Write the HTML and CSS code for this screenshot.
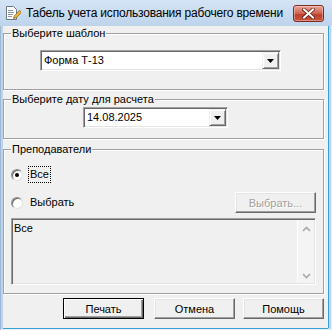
FILE: index.html
```html
<!DOCTYPE html>
<html lang="ru">
<head>
    <meta charset="UTF-8">
    <title>Табель учета использования рабочего времени</title>
    <link rel="stylesheet" href="styles.css">
</head>
<body>
    <div class="window">
        <div class="titlebar">
            <svg class="app-icon" width="16" height="16" viewBox="0 0 16 16">
                <path d="M1.5 1.5h7l3 3v10h-10z" fill="#fff" stroke="#6f7a88"/>
                <path d="M3 5.5h5M3 7.5h6M3 9.5h5M3 11.5h4" stroke="#8d99a8"/>
                <path d="M8.5 13.5l0.8-2.6 5.4-5.4 1.8 1.8-5.4 5.4z" fill="#f3b93a" stroke="#8a5b17" stroke-width="0.8"/>
            </svg>
            <span class="title">Табель учета использования рабочего времени</span>
            <div class="close-btn">
                <svg width="13" height="11" viewBox="0 0 13 11">
                    <path d="M2 1.5l9 8M11 1.5l-9 8" stroke="#5a1d14" stroke-width="3.6" stroke-linecap="square"/>
                    <path d="M2 1.5l9 8M11 1.5l-9 8" stroke="#fff" stroke-width="2" stroke-linecap="square"/>
                </svg>
            </div>
        </div>

        <div class="client">
            <div class="group group-template">
                <span class="group-title">Выберите шаблон</span>
                <div class="combo combo-template">
                    <span class="combo-text">Форма Т-13</span>
                    <span class="combo-btn"><svg width="7" height="4" viewBox="0 0 7 4"><path d="M0 0h7L3.5 4z"/></svg></span>
                </div>
            </div>

            <div class="group group-date">
                <span class="group-title">Выберите дату для расчета</span>
                <div class="combo combo-date">
                    <span class="combo-text">14.08.2025</span>
                    <span class="combo-btn"><svg width="7" height="4" viewBox="0 0 7 4"><path d="M0 0h7L3.5 4z"/></svg></span>
                </div>
            </div>

            <div class="group group-teachers">
                <span class="group-title">Преподаватели</span>
                <div class="radio-row">
                    <span class="radio checked"></span>
                    <span class="radio-label focused">Все</span>
                </div>
                <div class="radio-row radio-row-pick">
                    <span class="radio"></span>
                    <span class="radio-label">Выбрать</span>
                    <button class="btn btn-pick" disabled>Выбрать...</button>
                </div>
                <div class="memo">
                    <div class="memo-text">Все</div>
                    <div class="scrollbar">
                        <svg width="9" height="6" viewBox="0 0 9 6"><path d="M1 5l3.5-3.5L8 5" fill="none" stroke="#a8a8a8" stroke-width="1.6"/></svg>
                        <svg width="9" height="6" viewBox="0 0 9 6"><path d="M1 1l3.5 3.5L8 1" fill="none" stroke="#a8a8a8" stroke-width="1.6"/></svg>
                    </div>
                </div>
            </div>

            <div class="actions">
                <button class="btn btn-default btn-print">Печать</button>
                <button class="btn btn-cancel">Отмена</button>
                <button class="btn">Помощь</button>
            </div>
        </div>
    </div>
</body>
</html>
```

FILE: styles.css
```css
* {
    margin: 0;
    padding: 0;
    box-sizing: border-box;
}

body {
    width: 332px;
    height: 330px;
    overflow: hidden;
    background: #fff;
    color: #000;
    font-family: "Liberation Sans", Arial, sans-serif;
    font-size: 11px;
}

.window {
    width: 332px;
    height: 330px;
    background: #bed4eb;
    box-shadow: inset 1px 0 0 #9fb8d2, inset -1px 0 0 #e6f0fa, inset 0 -1px 0 #e6f0fa;
}

.titlebar {
    height: 26px;
    display: flex;
    align-items: center;
    padding: 0 8px 0 5px;
    background: linear-gradient(#d4e4f5, #bed4eb);
}

.app-icon {
    flex-shrink: 0;
}

.title {
    margin-left: 5px;
    font-size: 12px;
    letter-spacing: -0.2px;
    color: #000;
    white-space: nowrap;
}

.close-btn {
    flex-shrink: 0;
    margin-left: auto;
    width: 31px;
    height: 17px;
    display: flex;
    align-items: center;
    justify-content: center;
    border: 1px solid #7d2b1f;
    border-radius: 3px;
    background: linear-gradient(#e9a497, #d0634f 50%, #bd3f29 51%, #c9533c);
    box-shadow: inset 0 0 0 1px rgba(255,255,255,0.35);
}

.client {
    margin: 0 4px 0 3px;
    height: 302px;
    padding: 7px 4px 0 0;
    background: #f0f0f0;
    box-shadow: 1px 0 0 #3aa0d8, 0 1px 0 #3aa0d8;
}

/* group boxes */

.group {
    position: relative;
    border: 1px solid #a0a0a0;
    box-shadow: inset 1px 1px 0 #fff, 1px 1px 0 #fff;
}

.group-title {
    position: absolute;
    top: -7px;
    left: 7px;
    padding: 0 1px;
    line-height: 13px;
    background: #f0f0f0;
}

.group-template {
    height: 57px;
    padding: 16px 0 0 36px;
}

.group-date {
    margin-top: 9px;
    height: 40px;
    padding: 7px 0 0 79px;
}

.group-teachers {
    margin-top: 10px;
    height: 145px;
    padding: 16px 7px 0 7px;
}

/* combo boxes */

.combo {
    display: flex;
    height: 21px;
    padding: 1px;
    background: #fff;
    border: 1px solid;
    border-color: #a0a0a0 #fff #fff #a0a0a0;
    box-shadow: inset 1px 1px 0 #696969, inset -1px -1px 0 #e3e3e3;
}

.combo-template {
    width: 241px;
}

.combo-date {
    width: 145px;
}

.combo-text {
    flex: 1;
    padding-left: 2px;
    line-height: 17px;
}

.combo-btn {
    width: 17px;
    height: 17px;
    display: flex;
    align-items: center;
    justify-content: center;
    padding-top: 1px;
    background: #f0f0f0;
    border: 1px solid;
    border-color: #f0f0f0 #696969 #696969 #f0f0f0;
    box-shadow: inset 1px 1px 0 #fff, inset -1px -1px 0 #a0a0a0;
}

/* radio buttons */

.radio-row {
    display: flex;
    align-items: center;
    height: 17px;
}

.radio-row-pick {
    margin-top: 9px;
    height: 21px;
}

.radio {
    position: relative;
    width: 12px;
    height: 12px;
    flex-shrink: 0;
    border-radius: 50%;
    background: #fff;
    border: 1px solid;
    border-color: #8c8c8c #e0e0e0 #e0e0e0 #8c8c8c;
    box-shadow: inset 1px 1px 0 #6b6b6b;
}

.radio.checked::after {
    content: "";
    position: absolute;
    left: 3px;
    top: 3px;
    width: 4px;
    height: 4px;
    border-radius: 50%;
    background: #000;
}

.radio-label {
    margin-left: 5px;
    padding: 0 1px;
    line-height: 15px;
    border: 1px dotted transparent;
}

.radio-label.focused {
    border-color: #000;
}

/* buttons */

.btn {
    width: 81px;
    height: 21px;
    font-family: inherit;
    font-size: 11px;
    color: #000;
    background: #f0f0f0;
    border: 1px solid;
    border-color: #fff #696969 #696969 #fff;
    box-shadow: inset -1px -1px 0 #a0a0a0, inset 1px 1px 0 #e3e3e3;
}

.btn-default {
    border-color: #000;
    box-shadow: inset 1px 1px 0 #fff, inset -1px -1px 0 #696969, inset -2px -2px 0 #a0a0a0;
}

.btn:disabled {
    color: #a0a0a0;
    text-shadow: 1px 1px 0 #fff;
}

.btn-pick {
    margin-left: auto;
}

/* memo */

.memo {
    display: flex;
    margin-top: 5px;
    height: 67px;
    padding: 1px;
    background: #f0f0f0;
    border: 1px solid;
    border-color: #a0a0a0 #fff #fff #a0a0a0;
    box-shadow: inset 1px 1px 0 #696969, inset -1px -1px 0 #e3e3e3;
}

.memo-text {
    flex: 1;
    padding: 2px 1px;
    line-height: 13px;
}

.scrollbar {
    width: 17px;
    display: flex;
    flex-direction: column;
    justify-content: space-between;
    align-items: center;
    padding: 6px 0 4px;
    background: #f4f4f4;
    border-left: 1px solid #fff;
}

/* bottom actions */

.actions {
    display: flex;
    justify-content: flex-end;
    margin-top: 4px;
}

.btn-print {
    margin-right: 10px;
}

.btn-cancel {
    margin-right: 8px;
}
```
